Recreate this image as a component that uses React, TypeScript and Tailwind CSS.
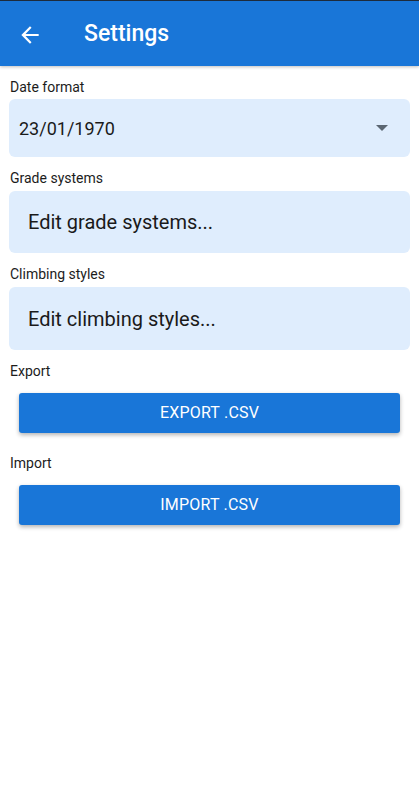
import React from 'react';

const Label = ({ children, className = '' }: { children: React.ReactNode; className?: string }) => (
  <p className={`px-[1px] text-[14px] leading-[20px] text-[#1c1c1c] ${className}`}>{children}</p>
);

const ActionButton = ({ children }: { children: React.ReactNode }) => (
  <button className="mx-[10px] flex h-[40px] w-[381px] items-center justify-center rounded-[3px] bg-[#1976d8] text-[16px] uppercase tracking-[0.2px] text-white shadow-[0_2px_4px_rgba(0,0,0,0.3)]">
    {children}
  </button>
);

export default function App() {
  return (
    <div className="min-h-[800px] w-[419px] bg-white font-['Roboto',sans-serif]">
      <div className="border-t border-[#1d2b3c] bg-[#1976d8] shadow-[0_1px_3px_rgba(0,0,0,0.25)]">
        <div className="flex h-[65px] items-center">
          <svg width="26" height="26" viewBox="0 0 24 24" className="ml-[17px] mt-[3px]" fill="#ffffff">
            <path d="M20 11H7.83l5.59-5.59L12 4l-8 8 8 8 1.41-1.41L7.83 13H20v-2z" />
          </svg>
          <h1 className="ml-[41px] mt-[2px] text-[23px] font-medium text-white">Settings</h1>
        </div>
      </div>

      <div className="flex flex-col px-[9px]">
        <Label className="mt-[11px] mb-[2px]">Date format</Label>
        <div className="flex h-[58px] items-center justify-between rounded-[6px] bg-[#dfedfd] pl-[10px] pr-[22px]">
          <span className="text-[18px] text-[#1a1a1a]">23/01/1970</span>
          <svg width="12" height="6" viewBox="0 0 12 6">
            <path d="M0 0h12L6 6z" fill="#5b6672" />
          </svg>
        </div>

        <Label className="mt-[11px] mb-[3px]">Grade systems</Label>
        <div className="flex h-[62px] items-center rounded-[6px] bg-[#dfedfd] px-[19px]">
          <span className="text-[20px] text-[#1a1a1a]">Edit grade systems...</span>
        </div>

        <Label className="mt-[11px] mb-[3px]">Climbing styles</Label>
        <div className="flex h-[63px] items-center rounded-[6px] bg-[#dfedfd] px-[19px]">
          <span className="text-[20px] text-[#1a1a1a]">Edit climbing styles...</span>
        </div>

        <Label className="mt-[11px] mb-[12px]">Export</Label>
        <ActionButton>Export .csv</ActionButton>

        <Label className="mt-[20px] mb-[12px]">Import</Label>
        <ActionButton>Import .csv</ActionButton>
      </div>
    </div>
  );
}
